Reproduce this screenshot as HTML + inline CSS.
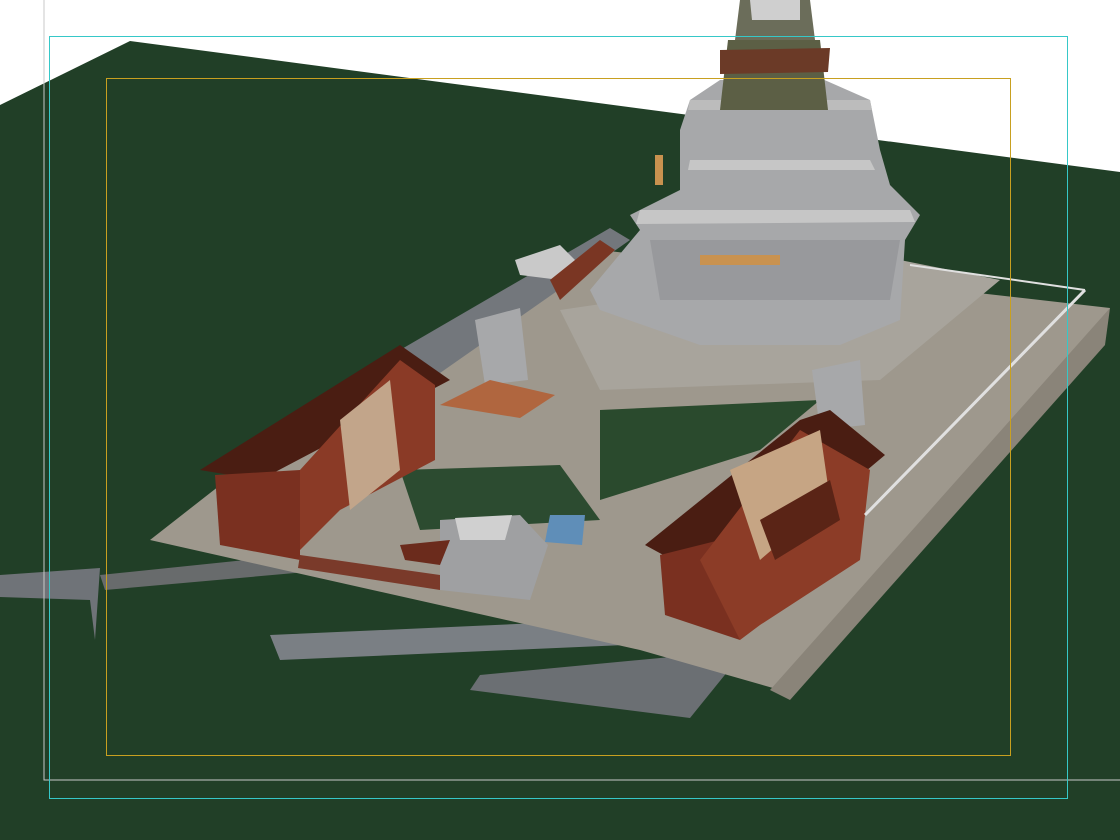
<!DOCTYPE html>
<html><head><meta charset="utf-8"><style>
html,body{margin:0;padding:0;width:1120px;height:840px;overflow:hidden;background:#fff}
svg{display:block}
</style></head><body>
<svg width="1120" height="840" viewBox="0 0 1120 840" xmlns="http://www.w3.org/2000/svg">
<rect width="1120" height="840" fill="#fff"/>
<polygon points="0,105 130,41 1120,172 1120,840 0,840" fill="#213f27"/>
<!-- ground slabs / shadows -->
<polygon points="0,575 100,568 95,640 90,600 0,597" fill="#6f7378"/>
<polygon points="270,635 720,615 740,640 280,660" fill="#7a7f84"/>
<polygon points="480,675 745,650 690,718 470,690" fill="#6b6f73"/>
<polygon points="100,575 440,540 440,560 105,590" fill="#686b6c"/>
<!-- platform -->
<polygon points="600,250 1110,308 1100,340 780,690 640,650 150,540 380,360" fill="#9e988d"/>
<polygon points="1110,308 1105,345 790,700 770,690" fill="#8a8479"/>
<polygon points="400,350 610,228 630,240 430,380" fill="#73777c"/>
<polygon points="560,310 900,260 1000,280 880,380 600,390" fill="#a8a49c"/>
<!-- green shadow wedges on platform -->
<polygon points="600,410 820,400 760,450 600,500" fill="#2a4a2d"/>
<polygon points="400,470 560,465 600,520 420,530" fill="#2c4b30"/>
<!-- temple -->
<polygon points="600,310 590,290 640,230 630,215 680,190 680,130 690,100 720,80 820,78 870,100 880,150 890,185 920,215 905,240 900,320 840,345 700,345" fill="#a7a8aa"/>
<polygon points="650,240 900,240 890,300 660,300" fill="#98999c"/>
<polygon points="640,210 910,210 915,222 636,224" fill="#c6c6c6"/>
<polygon points="690,160 870,160 875,170 688,170" fill="#c6c6c6"/>
<polygon points="690,100 870,100 872,110 688,110" fill="#bcbcbc"/>
<polygon points="728,40 820,40 828,110 720,110" fill="#5c5f45"/>
<polygon points="720,50 830,48 828,72 720,74" fill="#6b3a27"/>
<polygon points="740,0 810,0 815,40 735,40" fill="#6b6d5a"/>
<polygon points="750,0 800,0 800,20 752,20" fill="#cfcfcf"/>
<rect x="700" y="255" width="80" height="10" fill="#c9924f"/>
<rect x="655" y="155" width="8" height="30" fill="#c9924f"/>
<!-- left shrine -->
<polygon points="515,260 560,245 580,265 560,280 520,275" fill="#c9c9c9"/>
<polygon points="550,280 600,240 615,250 560,300" fill="#7a3623"/>
<!-- small towers -->
<polygon points="475,320 520,308 528,380 485,385" fill="#a7a8aa"/>
<polygon points="440,405 490,380 555,395 520,418" fill="#b0663f"/>
<polygon points="812,370 860,360 865,425 820,430" fill="#a7a8aa"/>
<!-- left building -->
<polygon points="200,470 400,345 450,380 260,480" fill="#4a1d12"/>
<polygon points="215,475 300,470 300,560 220,545" fill="#7a3020"/>
<polygon points="300,470 400,360 435,385 435,460 340,510 300,550" fill="#8a3a26"/>
<polygon points="340,420 390,380 400,470 350,510" fill="#c2a58a"/>
<polygon points="300,555 440,575 440,590 298,568" fill="#7a3a2a"/>
<!-- small front gate -->
<polygon points="440,520 520,515 548,545 530,600 440,590" fill="#9fa0a2"/>
<polygon points="455,518 512,515 505,540 460,540" fill="#d0d0d0"/>
<polygon points="550,515 585,515 582,545 545,542" fill="#5f8eb8"/>
<polygon points="400,545 450,540 440,565 405,560" fill="#6b2b1c"/>
<!-- right building -->
<polygon points="645,545 800,420 830,410 885,455 760,560 700,575" fill="#4a1d12"/>
<polygon points="660,555 720,540 740,640 665,615" fill="#7a3020"/>
<polygon points="700,560 800,430 870,470 860,560 760,625 740,640" fill="#8c3c27"/>
<polygon points="730,470 820,430 830,500 760,560" fill="#c6a584"/>
<polygon points="760,520 830,480 840,520 775,560" fill="#5a2416"/>
<!-- white rail -->
<polyline points="1085,290 865,515" stroke="#e0e0e0" stroke-width="3" fill="none"/>
<polyline points="1085,290 910,265" stroke="#e0e0e0" stroke-width="2" fill="none"/>
<!-- frames -->
<polyline points="44,0 44,780 1120,780" stroke="#c8c8c8" stroke-width="1" fill="none"/>
<rect x="49.5" y="36.5" width="1018" height="762" stroke="#36c8c8" stroke-width="1" fill="none"/>
<rect x="106.5" y="78.5" width="904" height="677" stroke="#c8a020" stroke-width="1" fill="none"/>
</svg>
</body></html>
